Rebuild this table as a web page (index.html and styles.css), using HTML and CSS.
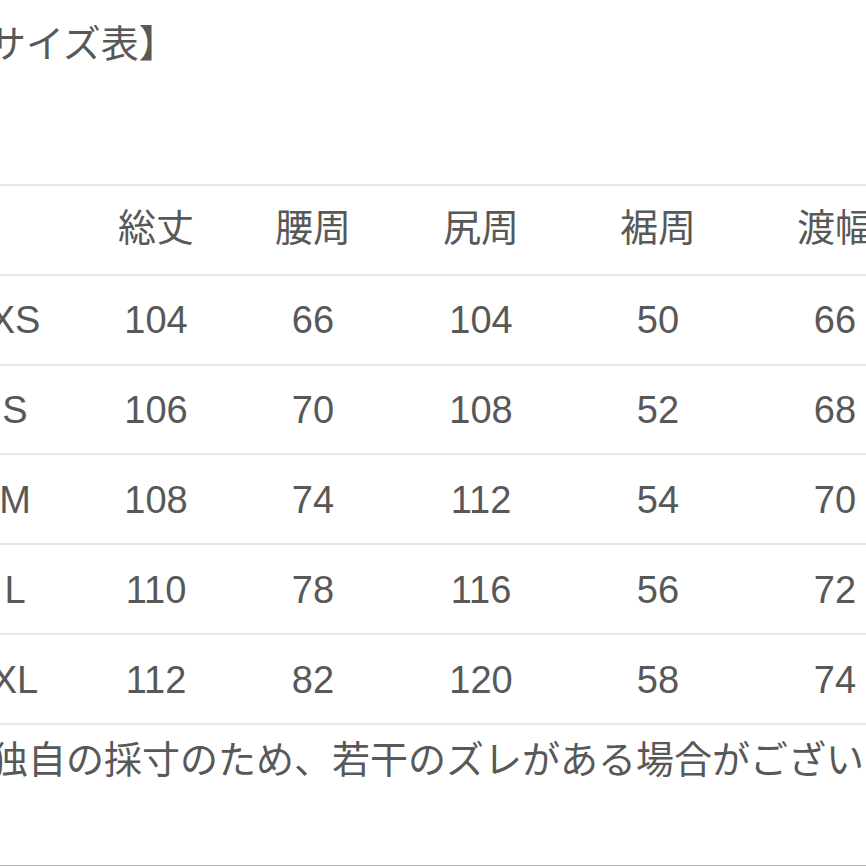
FILE: index.html
```html
<!DOCTYPE html>
<html lang="ja">
<head>
<meta charset="utf-8">
<title>サイズ表</title>
<link rel="stylesheet" href="styles.css">
</head>
<body>
<div class="page">
  <h2 class="title">【サイズ表】</h2>
  <div class="size-table">
    <div class="row head">
      <div class="cell"></div>
      <div class="cell">総丈</div>
      <div class="cell">腰周</div>
      <div class="cell">尻周</div>
      <div class="cell">裾周</div>
      <div class="cell">渡幅</div>
    </div>
    <div class="row">
      <div class="cell">XS</div>
      <div class="cell">104</div>
      <div class="cell">66</div>
      <div class="cell">104</div>
      <div class="cell">50</div>
      <div class="cell">66</div>
    </div>
    <div class="row">
      <div class="cell">S</div>
      <div class="cell">106</div>
      <div class="cell">70</div>
      <div class="cell">108</div>
      <div class="cell">52</div>
      <div class="cell">68</div>
    </div>
    <div class="row">
      <div class="cell">M</div>
      <div class="cell">108</div>
      <div class="cell">74</div>
      <div class="cell">112</div>
      <div class="cell">54</div>
      <div class="cell">70</div>
    </div>
    <div class="row">
      <div class="cell">L</div>
      <div class="cell">110</div>
      <div class="cell">78</div>
      <div class="cell">116</div>
      <div class="cell">56</div>
      <div class="cell">72</div>
    </div>
    <div class="row last">
      <div class="cell">XL</div>
      <div class="cell">112</div>
      <div class="cell">82</div>
      <div class="cell">120</div>
      <div class="cell">58</div>
      <div class="cell">74</div>
    </div>
  </div>
  <p class="note">独自の採寸のため、若干のズレがある場合がございます。</p>
  <div class="divider"></div>
</div>
</body>
</html>
```

FILE: styles.css
```css
html, body {
  margin: 0;
  padding: 0;
  background: #ffffff;
  overflow: hidden;
}

.page {
  width: 866px;
  height: 866px;
  overflow: hidden;
  font-family: "Liberation Sans", "Noto Sans CJK JP", sans-serif;
  color: #585858;
  font-size: 38px;
}

.title {
  margin: 16px 0 0 -50px;
  font-size: 38px;
  font-weight: 400;
  line-height: 57px;
  white-space: nowrap;
}

.size-table {
  margin: 111px 0 0 -55px;
  width: 972px;
}

.row {
  display: grid;
  grid-template-columns: 140px 142px 172px 164px 190px 164px;
  height: 87.8px;
  border-top: 2px solid #e7e7e7;
  align-items: center;
}

.row.last {
  border-bottom: 2px solid #e7e7e7;
}

.cell {
  text-align: center;
  line-height: 1.2;
  padding-top: 3px;
  white-space: nowrap;
}

.head .cell {
  padding-top: 0;
  padding-bottom: 3px;
}

.note {
  margin: 8px 0 0 -10px;
  line-height: 55px;
  white-space: nowrap;
}

.divider {
  margin-top: 77px;
  height: 2px;
  background: #b4b4b4;
}
```
